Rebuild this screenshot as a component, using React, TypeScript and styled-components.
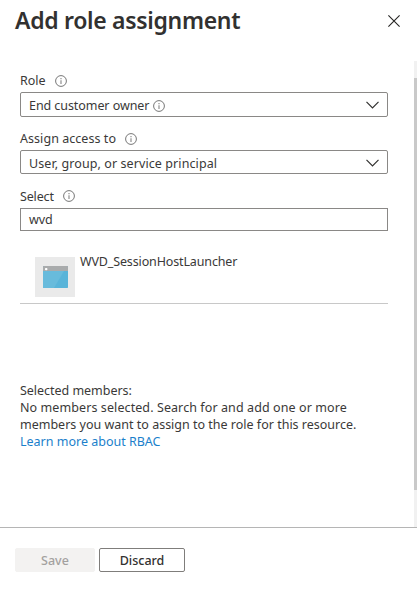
import React from 'react';
import styled, { createGlobalStyle } from 'styled-components';

const GlobalStyle = createGlobalStyle`
  * { box-sizing: border-box; }
  body { margin: 0; background: #fff; color: #3a3938; font: 12.5px/17px "Noto Sans", "Open Sans", sans-serif; }
`;

const Panel = styled.div`
  display: flex;
  flex-direction: column;
  width: 417px;
  height: 589px;
  overflow: hidden;
  background: #fff;
`;

const Header = styled.header`
  display: flex;
  justify-content: space-between;
  flex: 0 0 61px;
  padding: 4px 17px 0 15px;
`;

const Title = styled.h1`
  margin: 0;
  font-size: 23px;
  line-height: 32px;
  font-weight: 600;
  letter-spacing: -0.31px;
  color: #323130;
  white-space: nowrap;
`;

const CloseButton = styled.button`
  display: flex;
  width: 12px;
  height: 12px;
  margin-top: 11px;
  padding: 0;
  border: 0;
  background: none;
`;

const Body = styled.main`
  display: flex;
  flex: 0 0 466px;
`;

const Content = styled.div`
  flex: 1;
  padding: 9px 26px 0 20px;
`;

const ScrollTrack = styled.div`
  width: 3px;
  padding-top: 17px;
  background: #f1f1f1;
`;

const ScrollThumb = styled.div`
  height: 412px;
  background: #c9c9c9;
`;

const Label = styled.div<{ $height: number; $gap: number }>`
  display: flex;
  align-items: center;
  gap: ${p => p.$gap}px;
  height: ${p => p.$height}px;
  margin-bottom: 1px;
`;

const Text = styled.span<{ $spacing?: number }>`
  letter-spacing: ${p => p.$spacing ?? 0}px;
  white-space: nowrap;
`;

const Field = styled.div<{ $height: number; $after: number; $square?: boolean }>`
  display: flex;
  align-items: center;
  height: ${p => p.$height}px;
  margin-bottom: ${p => p.$after}px;
  padding: ${p => (p.$square ? 0 : 2)}px 8px 0;
  border: 1px solid #8a8886;
  border-radius: ${p => (p.$square ? 0 : 2)}px;
`;

const ChevronSlot = styled.span`
  display: flex;
  margin-left: auto;
  margin-top: -1px;
`;

const InfoSlot = styled.span`
  display: flex;
  margin-left: 4px;
`;

const Result = styled.div`
  display: flex;
  gap: 5px;
  height: 47px;
  padding-left: 15px;
  border-bottom: 1px solid #c8c8c8;
`;

const ResultIcon = styled.div`
  display: flex;
  align-items: center;
  justify-content: center;
  width: 40px;
  height: 40px;
  background: #eaeaea;
`;

const ResultName = styled(Text)`
  margin-top: -4px;
`;

const Members = styled.section`
  display: flex;
  flex-direction: column;
  margin-top: 78px;
`;

const Link = styled.a`
  color: #1b7fcb;
  text-decoration: none;
`;

const Footer = styled.footer`
  display: flex;
  gap: 4px;
  flex: 0 0 62px;
  padding: 20px 15px 0;
  border-top: 1px solid #b5b5b5;
`;

const Button = styled.button<{ $width: number }>`
  width: ${p => p.$width}px;
  height: 24px;
  padding: 1px 0 0;
  border: 1px solid #7f7d7b;
  border-radius: 2px;
  background: #fff;
  color: #323130;
  font: 550 12.5px/20px "Noto Sans", sans-serif;
  &:disabled {
    border-color: #f3f2f1;
    background: #f3f2f1;
    color: #a3a19f;
  }
`;

const InfoIcon = () => (
  <svg width="12" height="12" viewBox="0 0 12 12" fill="none">
    <circle cx="6" cy="6" r="5.4" stroke="#777" strokeWidth="1" />
    <path d="M6 5.2V9M6 3v1.2" stroke="#858585" strokeWidth="1.1" />
  </svg>
);

const Chevron = () => (
  <svg width="13" height="8" viewBox="0 0 13 8" fill="none">
    <path d="M.5 .8 6.5 6.8 12.5 .8" stroke="#323130" strokeWidth="1.2" />
  </svg>
);

const CloseIcon = () => (
  <svg width="12" height="12" viewBox="0 0 12 12" fill="none">
    <path d="M.4 .4 11.6 11.6M11.6 .4 .4 11.6" stroke="#252423" strokeWidth="1.1" />
  </svg>
);

const AppIcon = () => (
  <svg width="25" height="22" viewBox="0 0 25 22">
    <rect width="25" height="22" rx=".7" fill="#59b4d9" />
    <path d="M0 5h21L11 22H0z" fill="#68bbdc" />
    <path d="M0 .7Q0 0 .7 0h23.6q.7 0 .7.7V5H0z" fill="#a9abac" />
    <rect x="2" y="2" width="2.4" height="2.2" rx=".8" fill="#fff" />
  </svg>
);

export default function App() {
  return (
    <Panel>
      <GlobalStyle />
      <Header>
        <Title>Add role assignment</Title>
        <CloseButton aria-label="Close"><CloseIcon /></CloseButton>
      </Header>
      <Body>
        <Content>
          <Label $height={21} $gap={9}><Text>Role</Text><InfoIcon /></Label>
          <Field $height={25} $after={11}>
            <Text $spacing={-0.07}>End customer owner</Text>
            <InfoSlot><InfoIcon /></InfoSlot>
            <ChevronSlot><Chevron /></ChevronSlot>
          </Field>
          <Label $height={21} $gap={9}><Text $spacing={0.05}>Assign access to</Text><InfoIcon /></Label>
          <Field $height={24} $after={11}>
            <Text $spacing={0.09}>User, group, or service principal</Text>
            <ChevronSlot><Chevron /></ChevronSlot>
          </Field>
          <Label $height={22} $gap={9}><Text $spacing={-0.15}>Select</Text><InfoIcon /></Label>
          <Field $height={23} $after={26} $square><Text $spacing={-0.15}>wvd</Text></Field>
          <Result>
            <ResultIcon><AppIcon /></ResultIcon>
            <ResultName $spacing={-0.14}>WVD_SessionHostLauncher</ResultName>
          </Result>
          <Members>
            <Text $spacing={-0.03}>Selected members:</Text>
            <Text $spacing={0.09}>No members selected. Search for and add one or more</Text>
            <Text>members you want to assign to the role for this resource.</Text>
            <Link href="#"><Text>Learn more about RBAC</Text></Link>
          </Members>
        </Content>
        <ScrollTrack><ScrollThumb /></ScrollTrack>
      </Body>
      <Footer>
        <Button $width={80} disabled>Save</Button>
        <Button $width={86}>Discard</Button>
      </Footer>
    </Panel>
  );
}
